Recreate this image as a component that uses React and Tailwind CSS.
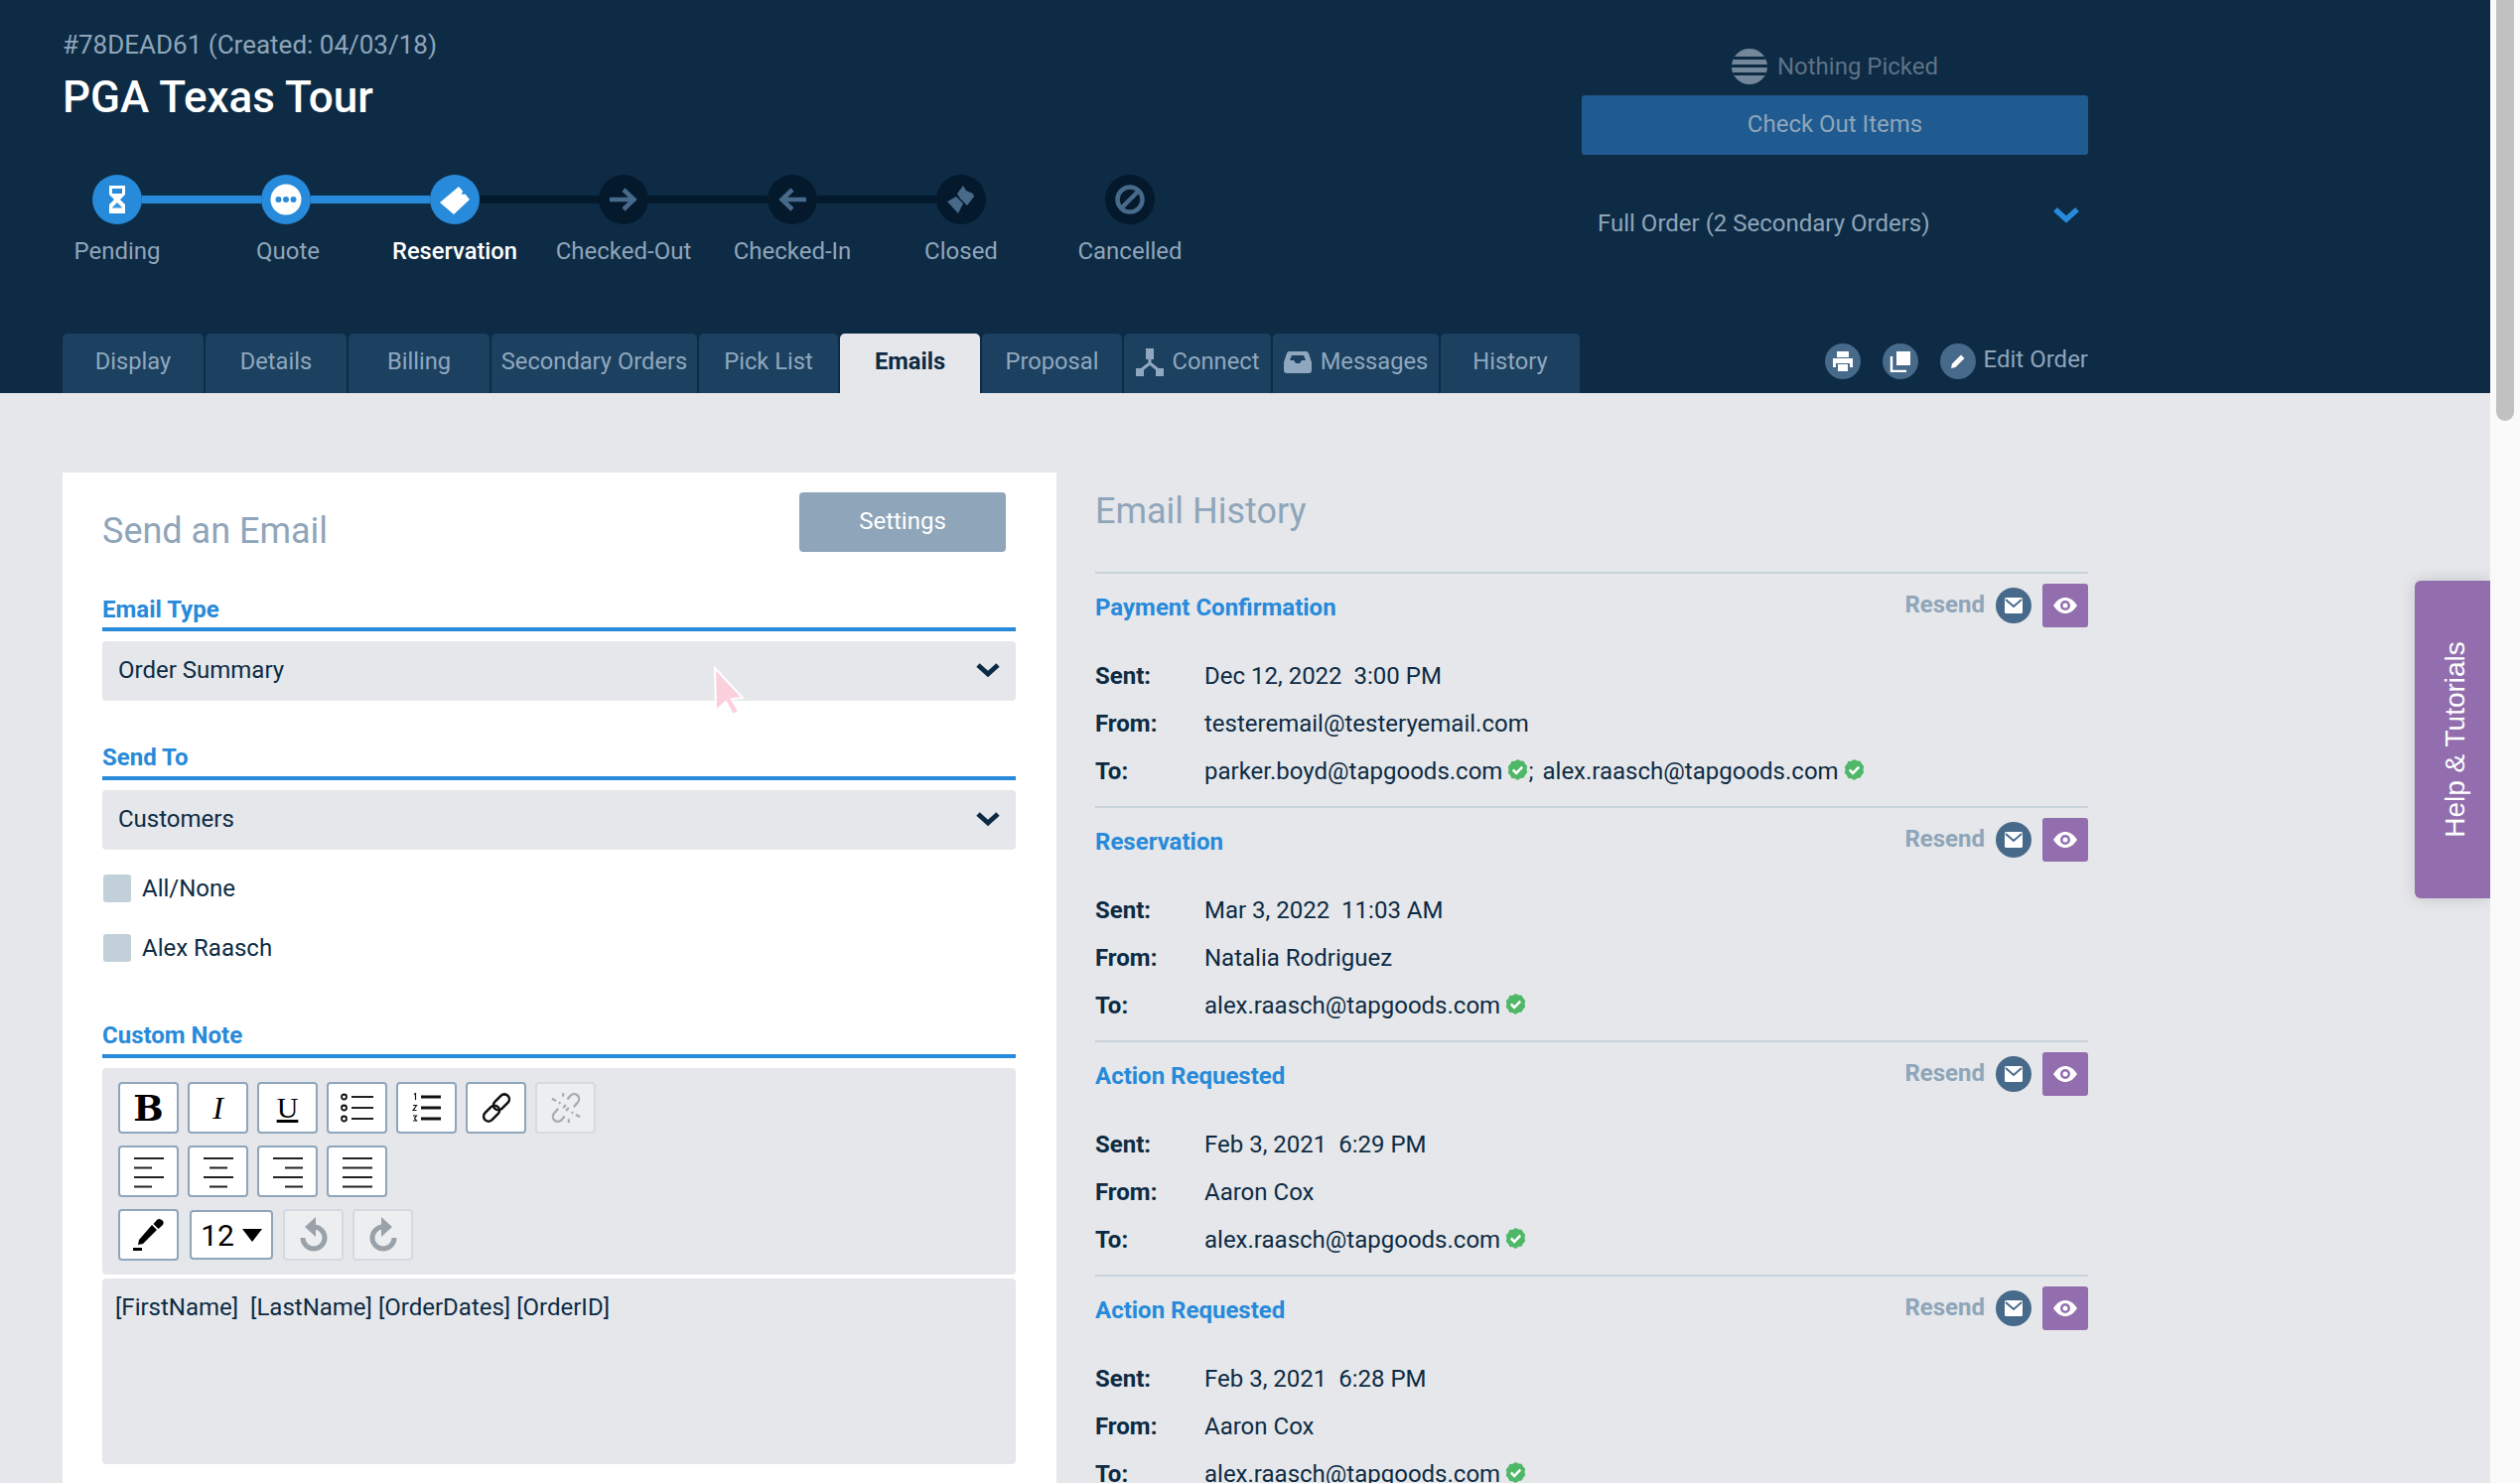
import React from "react";

const font = { fontFamily: "Roboto, sans-serif" };

function Hourglass() {
  return (
    <svg width="20" height="30" viewBox="0 0 20 30">
      <path d="M2 1h16v9l-5 5 5 5v9H2v-9l5-5-5-5z" fill="#fff" />
      <path d="M5 4h10v5H5z" fill="#278ada" />
      <path d="M10 18l5 5v2H5v-2z" fill="#278ada" opacity="0.9" />
      <path d="M5 23.500h10V26H5z" fill="#fff" />
    </svg>
  );
}
function Bubble() {
  return (
    <svg width="32" height="32" viewBox="0 0 32 32">
      <circle cx="16" cy="16" r="15.500" fill="#fff" />
      <circle cx="8.500" cy="16" r="3" fill="#278ada" />
      <circle cx="16" cy="16" r="3" fill="#278ada" />
      <circle cx="23.500" cy="16" r="3" fill="#278ada" />
    </svg>
  );
}
function Ticket() {
  return (
    <svg width="34" height="34" viewBox="0 0 34 34">
      <path d="M2 20L21 4l4 4.500-1 3.500 3.500-.5L32 17 16 32z" fill="#fff" />
    </svg>
  );
}
function ArrowR() {
  return (
    <svg width="30" height="26" viewBox="0 0 30 26">
      <path d="M1 13h25M15 3l10.500 10L15 23" fill="none" stroke="#47698a" strokeWidth="4.500" />
    </svg>
  );
}
function ArrowL() {
  return (
    <svg width="30" height="26" viewBox="0 0 30 26">
      <path d="M29 13H4M15 3L4.500 13 15 23" fill="none" stroke="#47698a" strokeWidth="4.500" />
    </svg>
  );
}
function Broken() {
  return (
    <svg width="34" height="34" viewBox="0 0 34 34">
      <path d="M13 11l6-8 3 5 7 3 1 3-7 9-7-7z" fill="#47698a" />
      <path d="M3 19l9-5 7 7-5 10z" fill="#47698a" />
    </svg>
  );
}
function Ban() {
  return (
    <svg width="30" height="30" viewBox="0 0 30 30">
      <circle cx="15" cy="15" r="12.500" fill="none" stroke="#47698a" strokeWidth="4.500" />
      <path d="M7 23L23 7" stroke="#47698a" strokeWidth="4.500" />
    </svg>
  );
}

function StepCircle({ active, children }) {
  return active ? (
    <div className="w-[50px] h-[50px] rounded-full bg-[#278ada] flex items-center justify-center shrink-0">{children}</div>
  ) : (
    <div className="w-[50px] h-[50px] rounded-full bg-[#04192b] flex items-center justify-center shrink-0">{children}</div>
  );
}

function Stepper() {
  const labels = ["Pending", "Quote", "Reservation", "Checked-Out", "Checked-In", "Closed", "Cancelled"];
  return (
    <div className="mt-[51px]">
      <div className="flex items-center pl-[30px]">
        <StepCircle active><Hourglass /></StepCircle>
        <div className="w-[120px] h-2 bg-[#278ada]" />
        <StepCircle active><Bubble /></StepCircle>
        <div className="w-[120px] h-2 bg-[#278ada]" />
        <StepCircle active><Ticket /></StepCircle>
        <div className="w-[120px] h-2 bg-[#04192b]" />
        <StepCircle><ArrowR /></StepCircle>
        <div className="w-[120px] h-2 bg-[#04192b]" />
        <StepCircle><ArrowL /></StepCircle>
        <div className="w-[120px] h-2 bg-[#04192b]" />
        <StepCircle><Broken /></StepCircle>
        <div className="w-[120px]" />
        <StepCircle><Ban /></StepCircle>
      </div>
      <div className="flex -ml-[30px] mt-3">
        {labels.map((l) =>
          l === "Reservation" ? (
            <div key={l} className="w-[170px] text-center text-[23.7px] leading-[30px] font-medium text-white">{l}</div>
          ) : l === "Quote" ? (
            <div key={l} className="w-[170px] pl-1 text-center text-[24px] leading-[30px] text-[#8fa5ba]">{l}</div>
          ) : (
            <div key={l} className="w-[170px] text-center text-[24px] leading-[30px] text-[#8fa5ba]">{l}</div>
          )
        )}
      </div>
    </div>
  );
}

function ConnectIcon() {
  return (
    <svg width="28" height="28" viewBox="0 0 28 28" className="shrink-0">
      <path d="M10 0h8v11h-8zM0 20h8v8H0zM20 20h8v8h-8z" fill="#8fa8bf" />
      <path d="M14 10v6M14 15l-9 7M14 15l9 7" stroke="#8fa8bf" strokeWidth="3" fill="none" />
    </svg>
  );
}
function InboxIcon() {
  return (
    <svg width="28" height="22" viewBox="0 0 28 22" className="shrink-0">
      <path d="M6 0h16a3 3 0 0 1 3 2l3 9v8a3 3 0 0 1-3 3H3a3 3 0 0 1-3-3v-8l3-9a3 3 0 0 1 3-2z" fill="#8fa8bf" />
      <path d="M6 9l2-5h12l2 5h-4l-2 3h-4l-2-3z" fill="#1c405f" />
    </svg>
  );
}

function Tab({ label, width, active, icon }) {
  if (active) {
    return (
      <div style={{ width }} className="h-[60px] pb-[2px] rounded-t-[5px] bg-[#e5e7ea] flex items-center justify-center text-[23.7px] font-bold text-[#0d2b44] shrink-0">
        {label}
      </div>
    );
  }
  return (
    <div style={{ width }} className="h-[60px] pb-[2px] rounded-t-[5px] bg-[#1c405f] flex items-center justify-center gap-[9px] text-[23.7px] text-[#8fa8bf] shrink-0 whitespace-nowrap">
      {icon}
      {label}
    </div>
  );
}

function RoundTool({ children }) {
  return <div className="w-9 h-9 rounded-full bg-[#47698a] flex items-center justify-center shrink-0">{children}</div>;
}

function Header() {
  return (
    <div className="bg-[#0d2b44] h-[396px] pl-[63px] pr-[405px] flex flex-col shrink-0">
      <div className="flex justify-between h-[336px]">
        <div className="flex flex-col">
          <div className="mt-[30px] text-[26px] leading-[30px] text-[#8fa5ba]">#78DEAD61 (Created: 04/03/18)</div>
          <div className="mt-[11px] text-[44px] leading-[54px] text-white font-medium">PGA Texas Tour</div>
          <Stepper />
        </div>
        <div className="w-[510px] flex flex-col">
          <div className="mt-[49px] h-9 flex items-center justify-center gap-[10px] text-[24px] text-[#5d7287]">
            <svg width="36" height="36" viewBox="0 0 36 36">
              <defs>
                <clipPath id="globe"><circle cx="18" cy="18" r="18" /></clipPath>
              </defs>
              <g clipPath="url(#globe)">
                <rect width="36" height="36" fill="#73869a" />
                <rect y="8" width="36" height="3" fill="#0d2b44" />
                <rect y="16" width="36" height="3" fill="#0d2b44" />
                <rect y="24" width="36" height="3" fill="#0d2b44" />
              </g>
            </svg>
            Nothing Picked
          </div>
          <div className="mt-[11px] h-[60px] pb-[2px] rounded-[3px] bg-[#1f5a91] flex items-center justify-center text-[24px] text-[#8fa5ba]">Check Out Items</div>
          <div className="mt-[54px] h-[30px] pl-4 pr-[9px] flex justify-between items-start text-[24px] leading-[30px] text-[#8fa5ba]">
            Full Order (2 Secondary Orders)
            <svg width="26" height="18" viewBox="0 0 26 18" className="-mt-[2px]">
              <path d="M2 3l11 10L24 3" fill="none" stroke="#278ada" strokeWidth="5.500" />
            </svg>
          </div>
        </div>
      </div>
      <div className="flex justify-between items-start">
        <div className="flex gap-[2px]">
          <Tab label="Display" width={142} />
          <Tab label="Details" width={142} />
          <Tab label="Billing" width={142} />
          <Tab label="Secondary Orders" width={207} />
          <Tab label="Pick List" width={140} />
          <Tab label="Emails" width={141} active />
          <Tab label="Proposal" width={141} />
          <Tab label="Connect" width={148} icon={<ConnectIcon />} />
          <Tab label="Messages" width={167} icon={<InboxIcon />} />
          <Tab label="History" width={140} />
        </div>
        <div className="flex items-center mt-[10px]">
          <RoundTool>
            <svg width="22" height="22" viewBox="0 0 22 22">
              <path d="M5 1h12v6H5zM1 8h20v9h-3v-4H4v4H1zM6 14h10v7H6z" fill="#fff" />
            </svg>
          </RoundTool>
          <div className="w-[22px]" />
          <RoundTool>
            <svg width="22" height="22" viewBox="0 0 22 22">
              <path d="M7 1h14v14H7z" fill="#fff" />
              <path d="M2 6v15h15" fill="none" stroke="#fff" strokeWidth="2.500" />
            </svg>
          </RoundTool>
          <div className="w-[22px]" />
          <RoundTool>
            <svg width="20" height="20" viewBox="0 0 20 20">
              <path d="M3 17l1-4.500L13 3.500l3.500 3.500-9 9z" fill="#fff" />
            </svg>
          </RoundTool>
          <div className="ml-[8px] -mt-1 text-[24px] text-[#8fa5ba] whitespace-nowrap">Edit Order</div>
        </div>
      </div>
    </div>
  );
}

function SectionLabel({ children, className }) {
  return (
    <div className={"h-[38px] border-b-4 border-[#278ada] text-[24px] leading-[30px] font-bold text-[#278ada] " + className}>{children}</div>
  );
}

function SelectBox({ children }) {
  return (
    <div className="mt-[10px] h-[60px] pb-[2px] rounded-[4px] bg-[#e5e7ea] pl-4 pr-4 flex items-center justify-between text-[24px] text-[#0d2b44]">
      {children}
      <svg width="24" height="18" viewBox="0 0 24 18">
        <path d="M2 4l10 9L22 4" fill="none" stroke="#0d2b44" strokeWidth="5" />
      </svg>
    </div>
  );
}

function Check({ label, className }) {
  return (
    <div className={"h-7 flex items-center text-[24px] text-[#0d2b44] " + className}>
      <div className="w-7 h-7 ml-[1px] rounded-[3px] bg-[#c2d0da] mr-[11px]" />
      {label}
    </div>
  );
}

function ToolBtn({ children, disabled }) {
  return disabled ? (
    <div className="w-[61px] h-[52px] rounded-[4px] border-2 border-[#d3dbe1] bg-[#eceef0] flex items-center justify-center shrink-0">{children}</div>
  ) : (
    <div className="w-[61px] h-[52px] rounded-[4px] border-2 border-[#8fa5ba] bg-white flex items-center justify-center shrink-0">{children}</div>
  );
}

function Lines({ rows }) {
  return (
    <svg width="32" height="34" viewBox="0 0 32 34">
      {rows.map((r, i) => (
        <rect key={i} x={r[0]} y={3 + i * 9.5} width={r[1]} height="2" fill="#222" />
      ))}
    </svg>
  );
}

function Toolbar() {
  return (
    <div className="mt-[10px] h-[208px] rounded-[4px] bg-[#e5e7ea] pt-[14px] pl-4">
      <div className="flex gap-[9px]">
        <ToolBtn><span className="text-[36px] leading-none font-bold text-black" style={{ fontFamily: "'DejaVu Serif', serif" }}>B</span></ToolBtn>
        <ToolBtn><span className="text-[32px] leading-none italic text-black" style={{ fontFamily: "'Liberation Serif', serif" }}>I</span></ToolBtn>
        <ToolBtn><span className="text-[30px] leading-none underline text-black" style={{ fontFamily: "'Liberation Serif', serif" }}>U</span></ToolBtn>
        <ToolBtn>
          <svg width="34" height="30" viewBox="0 0 34 30">
            <circle cx="3.500" cy="4" r="2.500" fill="none" stroke="#111" strokeWidth="1.800" />
            <circle cx="3.500" cy="15" r="2.500" fill="none" stroke="#111" strokeWidth="1.800" />
            <circle cx="3.500" cy="26" r="2.500" fill="none" stroke="#111" strokeWidth="1.800" />
            <path d="M11 4h22M11 15h22M11 26h22" stroke="#222" strokeWidth="1.800" />
          </svg>
        </ToolBtn>
        <ToolBtn>
          <svg width="30" height="30" viewBox="0 0 30 30">
            <path d="M9 4h20M9 15h20M9 26h20" stroke="#111" strokeWidth="3" />
            <path d="M2 1.500l1.500-1V7M1 12.500h3.500L1 17.500h3.500M1 23h3.500l-2 2.500 2 2.500H1" fill="none" stroke="#111" strokeWidth="1.200" />
          </svg>
        </ToolBtn>
        <ToolBtn>
          <svg width="34" height="34" viewBox="0 0 24 24" fill="none" stroke="#111" strokeWidth="1.800">
            <rect x="12" y="1.500" width="7" height="13" rx="3.500" transform="rotate(45 15.500 8)" />
            <rect x="5" y="9.500" width="7" height="13" rx="3.500" transform="rotate(45 8.500 16)" />
          </svg>
        </ToolBtn>
        <ToolBtn disabled>
          <svg width="34" height="36" viewBox="0 0 24 24" fill="none" stroke="#a5acb3" strokeWidth="1.600">
            <path d="M13 6l2-2.500a3.500 3.500 0 0 1 5.500 4.500l-3 3.500M11 18l-2 2.500A3.500 3.500 0 0 1 3.500 16l3-3.500M8 9l-1-1M16 15l1 1" />
            <path d="M10 4V1.500M5 7L2 5.500M14 20v2.500M19 17l3 1.500" />
            <path d="M10 12l2-2M14 12l-2 2" />
          </svg>
        </ToolBtn>
      </div>
      <div className="flex gap-[9px] mt-3">
        <ToolBtn><Lines rows={[[1, 30], [1, 18], [1, 30], [1, 18]]} /></ToolBtn>
        <ToolBtn><Lines rows={[[1, 30], [7, 18], [1, 30], [7, 18]]} /></ToolBtn>
        <ToolBtn><Lines rows={[[1, 30], [13, 18], [1, 30], [13, 18]]} /></ToolBtn>
        <ToolBtn><Lines rows={[[1, 30], [1, 30], [1, 30], [1, 30]]} /></ToolBtn>
      </div>
      <div className="flex items-center gap-[9px] mt-3">
        <ToolBtn>
          <svg width="32" height="36" viewBox="0 0 32 36">
            <path d="M28 2.500a3.500 3.500 0 0 1 1.500 6l-4 3.500-5-5 3.500-4a3.500 3.500 0 0 1 4-.5z" fill="#000" />
            <path d="M19 8l5 5L10 27l-5 1 1-5z" fill="#000" />
            <rect x="0" y="31" width="9" height="3" fill="#000" />
          </svg>
        </ToolBtn>
        <div className="w-[84px] h-[50px] ml-[2px] rounded-[4px] border-2 border-[#8fa5ba] bg-white flex items-center justify-center gap-[8px] text-[30px] text-black shrink-0">
          12
          <svg width="20" height="13" viewBox="0 0 20 13"><path d="M0 0h20L10 13z" fill="#000" /></svg>
        </div>
        <div className="ml-[1px]">
          <ToolBtn disabled>
            <svg width="32" height="38" viewBox="0 0 32 38" fill="none">
              <path d="M16 11a11 11 0 1 1-11 11" stroke="#9aa2a9" strokeWidth="5" />
              <path d="M18 1v20L7 11z" fill="#9aa2a9" />
            </svg>
          </ToolBtn>
        </div>
        <ToolBtn disabled>
          <svg width="32" height="38" viewBox="0 0 32 38" fill="none">
            <path d="M16 11a11 11 0 1 0 11 11" stroke="#9aa2a9" strokeWidth="5" />
            <path d="M14 1v20l11-10z" fill="#9aa2a9" />
          </svg>
        </ToolBtn>
      </div>
    </div>
  );
}

function LeftCard() {
  return (
    <div className="w-[1001px] bg-white pl-10 pr-[41px] pt-5 shrink-0">
      <div className="flex justify-between h-[60px]">
        <div className="mt-[14px] text-[36px] leading-[50px] text-[#8fa5ba]">Send an Email</div>
        <div className="mr-[10px] w-[208px] h-[60px] pb-[2px] rounded-[4px] bg-[#8fa5ba] text-white text-[24px] flex items-center justify-center">Settings</div>
      </div>
      <SectionLabel className="mt-[42px] pt-[1px]">Email Type</SectionLabel>
      <SelectBox>Order Summary</SelectBox>
      <SectionLabel className="mt-[42px]">Send To</SectionLabel>
      <SelectBox>Customers</SelectBox>
      <Check label="All/None" className="mt-[25px]" />
      <Check label="Alex Raasch" className="mt-8" />
      <SectionLabel className="mt-[59px]">Custom Note</SectionLabel>
      <Toolbar />
      <div className="mt-1 h-[187px] rounded-[4px] bg-[#e5e7ea] pl-[13px] pt-[14px] text-[24px] leading-[30px] text-[#0d2b44]">
        [FirstName]&nbsp; [LastName] [OrderDates] [OrderID]
      </div>
    </div>
  );
}

function Verified() {
  return (
    <svg width="21" height="21" viewBox="0 0 20 20" className="ml-[5px] -mt-[4px] shrink-0">
      <path d="M10 0l2.800 1.400 3 .3 1.400 2.700 2 2.300-.6 3 .6 3-2 2.300-1.400 2.700-3 .3L10 20l-2.800-1.700-3-.3-1.400-2.700-2-2.300.6-3-.6-3 2-2.300 1.400-2.700 3-.3z" fill="#4fb868" />
      <path d="M5.500 10l3.200 3.200 5.800-6" fill="none" stroke="#fff" strokeWidth="2.400" />
    </svg>
  );
}

function Row({ label, children }) {
  return (
    <div className="h-12 flex items-center text-[24px] text-[#0d2b44]">
      <div className="w-[110px] font-bold shrink-0">{label}</div>
      {children}
    </div>
  );
}

function EmailEntry({ title, sent, from, to }) {
  return (
    <div className="h-[236px] border-t-2 border-[#c7d2da] pt-[10px] shrink-0">
      <div className="h-[44px] flex items-center">
        <div className="mt-[4px] text-[24px] font-bold text-[#278ada]">{title}</div>
        <div className="ml-auto -mt-[2px] text-[24px] font-bold text-[#8fa5ba]">Resend</div>
        <div className="ml-[11px] w-9 h-9 rounded-full bg-[#47698a] flex items-center justify-center">
          <svg width="18" height="16" viewBox="0 0 18 16">
            <rect width="18" height="16" rx="1.500" fill="#fff" />
            <path d="M1 2l8 7 8-7" fill="none" stroke="#47698a" strokeWidth="2" />
          </svg>
        </div>
        <div className="ml-[11px] w-[46px] h-[44px] rounded-[3px] bg-[#936eae] flex items-center justify-center">
          <svg width="26" height="18" viewBox="0 0 26 18">
            <path d="M1 9C5 3 9 1 13 1s8 2 12 8c-4 6-8 8-12 8S5 15 1 9z" fill="#fff" />
            <circle cx="13" cy="9" r="5" fill="#936eae" />
            <circle cx="13" cy="9" r="2.500" fill="#fff" />
          </svg>
        </div>
      </div>
      <div className="mt-[25px]">
        <Row label="Sent:"><span className="whitespace-pre">{sent}</span></Row>
        <Row label="From:">{from}</Row>
        <Row label="To:">
          {to.map((t, i) => (
            <React.Fragment key={t}>
              {i > 0 && <span className="mr-[9px]">;</span>}
              {t}
              <Verified />
            </React.Fragment>
          ))}
        </Row>
      </div>
    </div>
  );
}

function History() {
  return (
    <div className="w-[1000px] ml-[39px] shrink-0">
      <div className="mt-[14px] mb-9 text-[36px] leading-[50px] text-[#8fa5ba]">Email History</div>
      <div className="flex flex-col">
        <EmailEntry title="Payment Confirmation" sent="Dec 12, 2022  3:00 PM" from="testeremail@testeryemail.com" to={["parker.boyd@tapgoods.com", "alex.raasch@tapgoods.com"]} />
        <EmailEntry title="Reservation" sent="Mar 3, 2022  11:03 AM" from="Natalia Rodriguez" to={["alex.raasch@tapgoods.com"]} />
        <EmailEntry title="Action Requested" sent="Feb 3, 2021  6:29 PM" from="Aaron Cox" to={["alex.raasch@tapgoods.com"]} />
        <EmailEntry title="Action Requested" sent="Feb 3, 2021  6:28 PM" from="Aaron Cox" to={["alex.raasch@tapgoods.com"]} />
      </div>
    </div>
  );
}

export default function App() {
  return (
    <div className="w-[2538px] h-[1494px] overflow-hidden flex bg-[#fafafa]" style={font}>
      <div className="w-[2508px] h-full relative flex flex-col bg-[#e5e7ea] overflow-hidden shrink-0">
        <Header />
        <div className="flex pl-[63px] pt-20 flex-1">
          <LeftCard />
          <History />
        </div>
        <div className="absolute left-[2432px] top-[585px] w-[76px] h-[320px] pl-[6px] rounded-l-[6px] bg-[#936eae] shadow-[0_0_16px_rgba(0,0,0,0.15)] flex items-center justify-center">
          <span className="-rotate-90 whitespace-nowrap text-white text-[28px]" style={{ fontFamily: "'Liberation Sans', sans-serif" }}>Help &amp; Tutorials</span>
        </div>
        <svg width="34" height="50" viewBox="0 0 34 50" className="absolute left-[718px] top-[671px]">
          <path d="M2 2l28 30-11 1 7 13-6 3-7-13-10 9z" fill="#fbd0dd" stroke="#fff" strokeWidth="2" />
        </svg>
      </div>
      <div className="flex-1 flex justify-center">
        <div className="w-[18px] h-[424px] rounded-b-[9px] bg-[#c1c1c1]" />
      </div>
    </div>
  );
}
